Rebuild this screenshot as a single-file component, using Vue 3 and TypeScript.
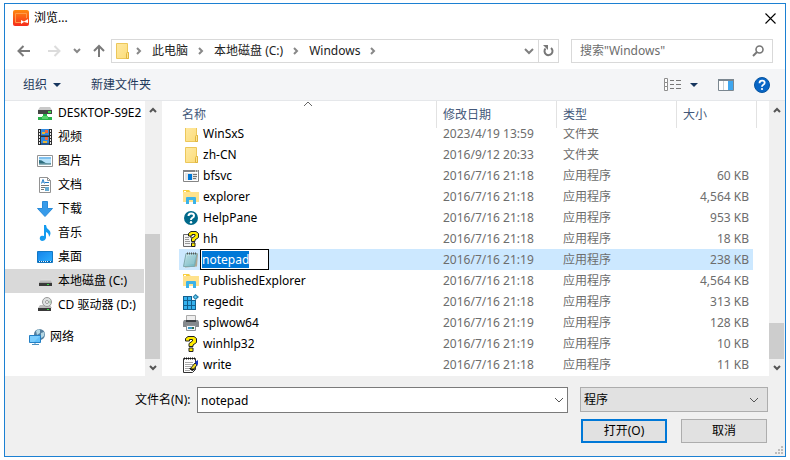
<script setup lang="ts">
import { onMounted, ref } from 'vue'

interface TreeItem {
  label: string
  icon: string
  root?: boolean
  selected?: boolean
}

interface FileItem {
  name: string
  icon: string
  date: string
  type: string
  size: string
  editing?: boolean
}

const crumbs: string[] = ['此电脑', '本地磁盘 (C:)', 'Windows']

const tree: TreeItem[] = [
  { label: 'DESKTOP-S9E2', icon: 'netdrive' },
  { label: '视频', icon: 'video' },
  { label: '图片', icon: 'picture' },
  { label: '文档', icon: 'document' },
  { label: '下载', icon: 'download' },
  { label: '音乐', icon: 'music' },
  { label: '桌面', icon: 'desktop' },
  { label: '本地磁盘 (C:)', icon: 'drive', selected: true },
  { label: 'CD 驱动器 (D:)', icon: 'cd' },
  { label: '网络', icon: 'network', root: true },
]

const app = '应用程序'
const files = ref<FileItem[]>([
  { name: 'WinSxS', icon: 'folder', date: '2023/4/19 13:59', type: '文件夹', size: '' },
  { name: 'zh-CN', icon: 'folder', date: '2016/9/12 20:33', type: '文件夹', size: '' },
  { name: 'bfsvc', icon: 'exe', date: '2016/7/16 21:18', type: app, size: '60 KB' },
  { name: 'explorer', icon: 'explorer', date: '2016/7/16 21:18', type: app, size: '4,564 KB' },
  { name: 'HelpPane', icon: 'helppane', date: '2016/7/16 21:18', type: app, size: '953 KB' },
  { name: 'hh', icon: 'hh', date: '2016/7/16 21:18', type: app, size: '18 KB' },
  { name: 'notepad', icon: 'notepad', date: '2016/7/16 21:19', type: app, size: '238 KB', editing: true },
  { name: 'PublishedExplorer', icon: 'explorer', date: '2016/7/16 21:18', type: app, size: '4,564 KB' },
  { name: 'regedit', icon: 'regedit', date: '2016/7/16 21:18', type: app, size: '313 KB' },
  { name: 'splwow64', icon: 'printer', date: '2016/7/16 21:19', type: app, size: '128 KB' },
  { name: 'winhlp32', icon: 'winhlp', date: '2016/7/16 21:19', type: app, size: '10 KB' },
  { name: 'write', icon: 'write', date: '2016/7/16 21:18', type: app, size: '11 KB' },
])

const fileName = ref('notepad')
const filter = ref('程序')
const renameBox = ref<HTMLInputElement[]>([])

onMounted(() => {
  const box = renameBox.value[0]
  box?.focus()
  box?.select()
})
</script>

<template>
  <svg class="sprite" aria-hidden="true">
    <defs>
      <linearGradient id="g-folder" x1="0" y1="0" x2="1" y2="1">
        <stop offset="0" stop-color="#ffe9a2" /><stop offset="1" stop-color="#fbdc79" />
      </linearGradient>
      <linearGradient id="g-blue" x1="0" y1="0" x2="1" y2="1">
        <stop offset="0" stop-color="#1583e9" /><stop offset="1" stop-color="#2cb0ff" />
      </linearGradient>
      <linearGradient id="g-logo" x1="0" y1="0" x2="0" y2="1">
        <stop offset="0" stop-color="#ff8a10" /><stop offset="1" stop-color="#f62a1c" />
      </linearGradient>
      <linearGradient id="g-drive" x1="0" y1="0" x2="0" y2="1">
        <stop offset="0" stop-color="#e4e4e4" /><stop offset="1" stop-color="#a2a2a2" />
      </linearGradient>
      <linearGradient id="g-note" x1="0" y1="0" x2="1" y2="1">
        <stop offset="0" stop-color="#d5eef2" /><stop offset="1" stop-color="#62aebb" />
      </linearGradient>
    </defs>
    <symbol id="i-folder" viewBox="0 0 16 16">
      <path d="M2.5.5h11v9h1v6h-12z" fill="url(#g-folder)" stroke="#ecc75a" />
      <path d="M12.5 15.5v-5q0-1 1-1h1v6z" fill="#ffe594" stroke="#dfb53f" />
    </symbol>
    <symbol id="i-netdrive" viewBox="0 0 16 16">
      <path d="M3 2h10l2 3H1z" fill="#c9c9c9" /><path d="M1 5h14v4H1z" fill="#454545" />
      <path d="M11 6h3v2h-3z" fill="#3ee04a" /><path d="M6 9h4v3h5v3H1v-3h5z" fill="#27b148" />
      <path d="M5 11h6v3H5z" fill="#58d26d" />
    </symbol>
    <symbol id="i-video" viewBox="0 0 16 16">
      <path d="M1 0h14v16H1z" fill="#303030" /><path d="M4 0h8v7H4zM4 8h8v8H4z" fill="#338ae0" />
      <path d="M5 3h3v2H5zM6 12h4v3H6z" fill="#e5b63b" /><path d="M8 1h3v3H8zM8 8h3v3H8z" fill="#ef683e" />
      <path d="M4 6h8v1H4zM4 14h8v2H4z" fill="#255690" />
      <path d="M2.5 1v15M13.5 1v15" stroke="#eee" stroke-dasharray="2 1" />
    </symbol>
    <symbol id="i-picture" viewBox="0 0 16 16">
      <path d="M.5 2.5h15v11H.5z" fill="#fff" stroke="#939393" /><path d="M2 4h12v8H2z" fill="#b7e3fa" />
      <path d="M2 4h12v2H2z" fill="#7fc0ee" />
      <path d="M2 7q3 0 5 2t7 1v1H2z" fill="#2f6f80" /><path d="M2 10.500h12V12H2z" fill="#8fb4bc" />
    </symbol>
    <symbol id="i-document" viewBox="0 0 16 16">
      <path d="M2.5.5h8l3 3v12h-11z" fill="#fff" stroke="#929292" /><path d="M10.5.5v3h3" fill="none" stroke="#929292" />
      <path d="M4.500 6.500l1.500-4 1.500 4m-2-1h1M8 5.500h4" stroke="#237bc5" fill="none" />
      <path d="M4 8.500h8M4 10.500h8M4 12.500h3" stroke="#777" /><path d="M8 10h4v4H8z" fill="#69acd2" />
    </symbol>
    <symbol id="i-download" viewBox="0 0 16 16">
      <path d="M5.500.5h5v7h5L8 15.500.5 7.500h5z" fill="#379bea" stroke="#298bd9" />
    </symbol>
    <symbol id="i-music" viewBox="0 0 16 16">
      <path d="M7 0h2q0 3 3 5 3 3 0 7 0-4-3-5v6q-1 3-4 3-3-1-2-4 1-2 4-1z" fill="#149bef" />
    </symbol>
    <symbol id="i-desktop" viewBox="0 0 16 16">
      <path d="M.5 2.500h15v11H.5z" fill="url(#g-blue)" stroke="#1278c4" />
      <path d="M1 12.500h14" stroke="#0c5c9e" /><path d="M2 12.500h1M4 12.500h7M13 12.500h1" stroke="#e9f7ff" stroke-dasharray="1 1" />
    </symbol>
    <symbol id="i-drive" viewBox="0 0 16 16">
      <path d="M4 6h9l2 4H2z" fill="url(#g-drive)" /><path d="M2 10h13v3H2z" fill="#393939" />
      <path d="M10 11h2v1h-2z" fill="#34dc41" />
    </symbol>
    <symbol id="i-cd" viewBox="0 0 16 16">
      <path d="M3 8h10l2 3H1z" fill="#bdbdbd" />
      <circle cx="10" cy="5" r="4.500" fill="#dfe2e2" stroke="#989898" /><path d="M10 5l4-2v4z" fill="#b5cfbb" />
      <circle cx="10" cy="5" r="1.500" fill="#fff" stroke="#999" />
      <path d="M1 11h13v3H1z" fill="#393939" /><path d="M10 12h2v1h-2z" fill="#34dc41" />
    </symbol>
    <symbol id="i-network" viewBox="0 0 16 16">
      <circle cx="10.500" cy="5.500" r="5.500" fill="#547f9e" />
      <path d="M7 2q3-3 4-1v3L8 6zM12 4l3-1q1 3-1 5l-2 1z" fill="#b4d7e4" />
      <path d="M.5 6.500h11v7H.5z" fill="#60c0fa" stroke="#237fc4" /><path d="M1 7h10L5 13H1z" fill="#8cd6ff" opacity=".6" />
      <path d="M3 15.500h7M6 14v1" stroke="#4d91bf" />
    </symbol>
    <symbol id="i-exe" viewBox="0 0 16 16">
      <path d="M.5 2.500h15v11H.5z" fill="#fff" stroke="#858585" /><path d="M0 2h16v2H0z" fill="#858585" />
      <path d="M12 3h1M14 3h1" stroke="#fff" /><path d="M2 5h12v7H2z" fill="#e4e4e4" />
      <path d="M5 6h4v6H5z" fill="#0078d7" /><path d="M10 6.500h4M10 8.500h4M10 10.500h3" stroke="#777" />
    </symbol>
    <symbol id="i-explorer" viewBox="0 0 16 16">
      <path d="M0 1h6l2 2h8v10H0z" fill="#ffe28c" /><path d="M0 1h6l1 2H0z" fill="#f8cf42" /><path d="M1 2h2v1H1z" fill="#fff" />
      <path d="M3 15V9q0-1 1-1h8q1 0 1 1v6h-3v-4H6v4z" fill="#3bb2e8" />
    </symbol>
    <symbol id="i-helppane" viewBox="0 0 16 16">
      <circle cx="8" cy="8" r="7" fill="#00698a" />
      <path d="M5.500 6q0-2.500 2.700-2.500T11 5.700Q11 7 9.300 7.800 8 8.400 8 10" fill="none" stroke="#fff" stroke-width="2" />
      <circle cx="8" cy="12.300" r="1.200" fill="#fff" />
    </symbol>
    <symbol id="i-hh" viewBox="0 0 16 16">
      <path d="M.5 3.500h7v3h4v9H.5z" fill="#f5f5f5" stroke="#686868" /><path d="M2 6.500h4M2 8.500h4M2 10.500h5M2 12.500h5" stroke="#999" />
      <path d="M5.500 5V2.500L8 .5h5l2.500 2v4L12 9v1.500H8.500V7.500L12 5V3.500H9V5zM8.500 12h3.500v3.500H8.500z" fill="#ffec00" stroke="#222" />
    </symbol>
    <symbol id="i-notepad" viewBox="0 0 16 16">
      <path d="M4 1.500h11l-1 13-12 1z" fill="#b3a790" /><path d="M3 1.500h11l-2.500 13H.5z" fill="url(#g-note)" stroke="#7fa9ae" />
      <path d="M4 5h8M3.500 7h8M3 9h8M3 11h8" stroke="#9cccd3" /><path d="M4 1.500h10" stroke="#555" stroke-width="2" stroke-dasharray="1 1" />
    </symbol>
    <symbol id="i-regedit" viewBox="0 0 16 16">
      <path d="M0 2h9v4h4v10H0z" fill="#12608f" />
      <path d="M1 3h3v3H1zM5 3h3v3H5zM1 7h3v4H1zM5 7h3v4H5zM9 7h3v4H9zM1 12h3v3H1zM5 12h3v3H5zM9 12h3v3H9z" fill="#35b2ee" />
      <path d="M12.500 0L16 3l-3.500 3L9.500 3z" fill="#267eaa" /><path d="M12.500 1.500L14 3l-1.500 1.500L11 3z" fill="#6bd1f4" />
    </symbol>
    <symbol id="i-printer" viewBox="0 0 16 16">
      <path d="M3.500.5h9v6h-9z" fill="#eee" stroke="#aaa" /><path d="M1 5h14l1 2v5H0V7z" fill="#85898d" />
      <path d="M3 5h10v2H3z" fill="#3d4145" /><path d="M3.500 10.500h9v5h-9z" fill="#f3f7fa" stroke="#8b8f93" />
      <path d="M5 12h4v2H5z" fill="#389bc8" /><path d="M9 12h2v2H9z" fill="#346c48" />
    </symbol>
    <symbol id="i-winhlp" viewBox="0 0 16 16">
      <path d="M2.500 5V2.500L5 .5h6l2.500 2v4L10 9v1.500H6V7.500L9.500 5V3.500H6.500V5zM6 12h4v3.500H6z" fill="#ffec00" stroke="#222" />
    </symbol>
    <symbol id="i-write" viewBox="0 0 16 16">
      <path d="M.5 1.500h12v11l-3 3h-9z" fill="#fff" stroke="#333" /><path d="M1 1.500h12" stroke="#111" stroke-width="2" stroke-dasharray="1 1" />
      <path d="M2 5.500h8M2 7.500h8M2 9.500h6M2 11.500h5M2 13.500h5" stroke="#aaa" />
      <path d="M7 12l5-6 2 2-4 5z" fill="#f2db21" stroke="#222" /><path d="M12 5l3-2v4l-1 2z" fill="#1a35c0" /><path d="M6 11l7 1-4 2z" fill="#111" />
    </symbol>
    <symbol id="i-up" viewBox="0 0 8 8"><path d="M1 6l3-3 3 3" fill="none" stroke="#555" stroke-width="2" /></symbol>
    <symbol id="i-down" viewBox="0 0 8 8"><path d="M1 2l3 3 3-3" fill="none" stroke="#555" stroke-width="2" /></symbol>
    <symbol id="i-recent" viewBox="0 0 8 8"><path d="M1 2l3 3 3-3" fill="none" stroke="#888" stroke-width="2" /></symbol>
    <symbol id="i-next" viewBox="0 0 8 8"><path d="M2 1l3 3-3 3" fill="none" stroke="#888" stroke-width="2" /></symbol>
    <symbol id="i-combo" viewBox="0 0 10 8"><path d="M1 2l4 4 4-4" fill="none" stroke="#555" /></symbol>
    <symbol id="i-caret" viewBox="0 0 8 4"><path d="M0 0h8L4 4z" fill="#16365f" /></symbol>
  </svg>

  <main class="dialog">
    <header class="title">
      <svg class="i16" viewBox="0 0 16 16" aria-hidden="true">
        <rect width="16" height="16" rx="2" fill="url(#g-logo)" />
        <path d="M8 12.500H2.500v-9h11V8" fill="none" stroke="#ff9a4a" />
        <path d="M8 10l3 1.500L15 9v4l-4-1-3 2z" fill="#fff" />
      </svg>
      <h1>浏览...</h1>
      <button class="close" type="button" aria-label="关闭">
        <svg width="11" height="11" viewBox="0 0 11 11"><path d="M.5.5l10 10M10.500.5l-10 10" stroke="#000" stroke-width="1.100" /></svg>
      </button>
    </header>

    <nav class="nav">
      <div class="history">
        <button type="button" aria-label="后退">
          <svg width="14" height="12" viewBox="0 0 14 12"><path d="M13 6H2M6.500 1L1.500 6l5 5" fill="none" stroke="#7a7a7a" stroke-width="2" /></svg>
        </button>
        <button type="button" aria-label="前进" disabled>
          <svg width="14" height="12" viewBox="0 0 14 12"><path d="M1 6h11M7.500 1l5 5-5 5" fill="none" stroke="#dcdcdc" stroke-width="2" /></svg>
        </button>
        <button type="button" class="recent" aria-label="最近浏览的位置"><svg class="i8"><use href="#i-recent" /></svg></button>
        <button type="button" aria-label="向上">
          <svg width="12" height="13" viewBox="0 0 12 13"><path d="M6 13V2M1 7l5-5 5 5" fill="none" stroke="#7a7a7a" stroke-width="2" /></svg>
        </button>
      </div>
      <div class="address">
        <svg class="i16 place"><use href="#i-folder" /></svg>
        <svg class="i8"><use href="#i-next" /></svg>
        <template v-for="crumb in crumbs" :key="crumb">
          <a href="#">{{ crumb }}</a>
          <svg class="i8"><use href="#i-next" /></svg>
        </template>
        <button type="button" class="previous" aria-label="以前的位置">
          <svg width="10" height="8" viewBox="0 0 10 8"><path d="M1 2l4 4 4-4" fill="none" stroke="#808080" stroke-width="2" /></svg>
        </button>
        <button type="button" class="refresh" aria-label="刷新">
          <svg width="11" height="12" viewBox="0 0 11 12"><path d="M8 3a4 4 0 1 1-5.500.5" fill="none" stroke="#777" stroke-width="2" /><path d="M0 0h5v5L3.500 3.500z" fill="#777" /></svg>
        </button>
      </div>
      <label class="search">
        <input type="search" placeholder="搜索&quot;Windows&quot;" aria-label="搜索" />
        <svg width="12" height="12" viewBox="0 0 12 12"><circle cx="7.500" cy="4.500" r="3.500" fill="none" stroke="#777" stroke-width="1.600" /><path d="M5 7l-4 4" stroke="#777" stroke-width="2" /></svg>
      </label>
    </nav>

    <div class="commands">
      <button type="button">组织<svg class="caret"><use href="#i-caret" /></svg></button>
      <button type="button">新建文件夹</button>
      <span class="spring"></span>
      <button type="button" class="views" aria-label="更改视图">
        <svg width="17" height="13" viewBox="0 0 17 13">
          <path d="M.5.5h3v4h-3zM.5 4.500h3v4h-3zM.5 8.500h3v4h-3z" fill="#fff" stroke="#8e8e8e" />
          <path d="M6 2.500h4M12 2.500h5M6 6.500h4M12 6.500h5M6 10.500h4M12 10.500h5" stroke="#777" />
        </svg>
        <svg class="caret"><use href="#i-caret" /></svg>
      </button>
      <button type="button" class="pane" aria-label="预览窗格">
        <svg width="16" height="12" viewBox="0 0 16 12"><path d="M.5.5h15v11H.5z" fill="#fff" stroke="#7b8790" /><path d="M0 0h16v2H0z" fill="#7b8790" /><path d="M10 2h5v9h-5z" fill="#3fa6ee" /><path d="M5.500 2v9" stroke="#c8d0d5" /></svg>
      </button>
      <button type="button" aria-label="帮助">
        <svg class="i16" viewBox="0 0 16 16"><circle cx="8" cy="8" r="7.500" fill="#0866c6" stroke="#07549f" /><path d="M5.500 6.200q0-2.500 2.600-2.500t2.600 2q0 1.200-1.400 2T8 9.800" fill="none" stroke="#fff" stroke-width="1.800" /><circle cx="8" cy="12" r="1.100" fill="#fff" /></svg>
      </button>
    </div>

    <div class="body">
      <aside class="side">
        <ul class="tree">
          <li v-for="item in tree" :key="item.label" :class="{ root: item.root, selected: item.selected }">
            <svg class="i16"><use :href="`#i-${item.icon}`" /></svg>
            <span>{{ item.label }}</span>
          </li>
        </ul>
        <div class="scroll">
          <button type="button" aria-label="向上滚动"><svg class="i8"><use href="#i-up" /></svg></button>
          <div class="track"><div class="thumb" :style="{ height: '52%' }"></div></div>
          <button type="button" aria-label="向下滚动"><svg class="i8"><use href="#i-down" /></svg></button>
        </div>
      </aside>

      <section class="list">
        <table>
          <thead>
            <tr>
              <th>名称<svg class="sort" viewBox="0 0 10 6"><path d="M1 5l4-4 4 4" fill="none" stroke="#666" /></svg></th>
              <th>修改日期</th>
              <th>类型</th>
              <th>大小</th>
            </tr>
          </thead>
          <tbody>
            <tr v-for="file in files" :key="file.icon + file.size + file.date" :class="{ selected: file.editing }">
              <td class="name">
                <svg class="i16"><use :href="`#i-${file.icon}`" /></svg>
                <input v-if="file.editing" ref="renameBox" v-model="file.name" class="rename" type="text" aria-label="重命名" spellcheck="false" />
                <span v-else>{{ file.name }}</span>
              </td>
              <td>{{ file.date }}</td>
              <td class="type">{{ file.type }}</td>
              <td class="size">{{ file.size }}</td>
            </tr>
          </tbody>
        </table>
        <div class="scroll">
          <button type="button" aria-label="向上滚动"><svg class="i8"><use href="#i-up" /></svg></button>
          <div class="track"><div class="thumb" :style="{ height: '15%' }"></div></div>
          <button type="button" aria-label="向下滚动"><svg class="i8"><use href="#i-down" /></svg></button>
        </div>
      </section>
    </div>

    <footer class="footer">
      <label class="caption" for="file-name">文件名(N):</label>
      <div class="combo">
        <input id="file-name" v-model="fileName" type="text" spellcheck="false" />
        <button type="button" aria-label="展开"><svg class="i10"><use href="#i-combo" /></svg></button>
      </div>
      <div class="choices">
        <div class="filter">
          <select v-model="filter" aria-label="文件类型"><option>程序</option></select>
          <svg class="i10"><use href="#i-combo" /></svg>
        </div>
        <div class="actions">
          <button type="button" class="open">打开(O)</button>
          <button type="button">取消</button>
        </div>
      </div>
      <svg class="grip" width="8" height="8" viewBox="0 0 8 8"><path d="M6 0h2v2H6zM3 3h2v2H3zM6 3h2v2H6zM0 6h2v2H0zM3 6h2v2H3zM6 6h2v2H6z" fill="#bcbcbc" /></svg>
    </footer>
  </main>
</template>

<style>
body {
  background: #fff;
}
#app {
  display: flex;
  min-height: 100vh;
}
</style>

<style scoped>
.sprite {
  position: absolute;
  width: 0;
  height: 0;
}
.dialog,
.dialog button,
.dialog input,
.dialog select {
  font-family: 'Noto Sans', 'Noto Sans CJK SC', sans-serif;
  font-size: 12px;
  line-height: 18px;
  color: #000;
}
.dialog {
  flex: 1;
  min-width: 0;
  display: flex;
  flex-direction: column;
  box-sizing: border-box;
  margin: 3px 4px;
  border: 1px solid #1c80d2;
  background: #fff;
}
button {
  display: flex;
  align-items: center;
  justify-content: center;
  padding: 0;
  border: 0;
  background: none;
}
input,
select {
  box-sizing: border-box;
  min-width: 0;
  margin: 0;
  border: 0;
  border-radius: 0;
  outline: 0;
  background: none;
}
svg {
  display: block;
  flex: none;
}
.i16 {
  width: 16px;
  height: 16px;
}
.i8 {
  width: 8px;
  height: 8px;
}
.i10 {
  width: 10px;
  height: 8px;
}
.caret {
  width: 8px;
  height: 4px;
}

.title {
  display: flex;
  align-items: center;
  gap: 5px;
  height: 28px;
  padding: 0 9px 0 8px;
}
h1 {
  flex: 1;
  margin: 0;
  font-size: 12px;
  font-weight: 400;
  line-height: 20px;
}

.nav {
  display: flex;
  align-items: center;
  height: 37px;
  padding: 0 12px;
}
.history {
  display: flex;
  align-items: center;
  gap: 16px;
  width: 94px;
}
.history .recent {
  margin: 0 -4px;
}
.address {
  flex: 1;
  display: flex;
  align-items: center;
  gap: 9px;
  box-sizing: border-box;
  height: 24px;
  padding-left: 2px;
  border: 1px solid #d9d9d9;
}
.address .place {
  margin-right: -4px;
}
.address a {
  color: #222;
  text-decoration: none;
  white-space: nowrap;
}
.previous {
  margin-left: auto;
}
.refresh {
  align-self: stretch;
  width: 20px;
  margin-left: -5px;
  border-left: 1px solid #d9d9d9;
}
.search {
  display: flex;
  align-items: center;
  box-sizing: border-box;
  width: 202px;
  height: 24px;
  margin-left: 12px;
  padding: 0 8px;
  border: 1px solid #d9d9d9;
}
.search input {
  flex: 1;
  padding: 0;
}
.search input::placeholder {
  color: #6d6d6d;
  opacity: 1;
}

.commands {
  display: flex;
  align-items: center;
  gap: 30px;
  height: 31px;
  padding: 0 15px 0 18px;
  border-bottom: 1px solid #e5e7ea;
  background: #f4f5f7;
}
.commands button {
  gap: 6px;
  color: #1e395b;
}
.spring {
  flex: 1;
}
.commands .views {
  gap: 9px;
}
.commands .pane {
  margin: 0 -10px;
}

.body {
  flex: 1;
  display: flex;
}
.side {
  display: flex;
  width: 156px;
  border-right: 1px solid #f0f0f0;
}
.tree {
  flex: 1;
  min-width: 0;
  margin: 0;
  padding: 0 1px 0 0;
  overflow: hidden;
  list-style: none;
}
.tree li {
  display: flex;
  align-items: center;
  gap: 5px;
  height: 24px;
  padding-left: 32px;
  overflow: hidden;
  white-space: nowrap;
}
.tree .root {
  margin-top: 8px;
  padding-left: 24px;
}
.tree .selected {
  background: #d9d9d9;
}
.scroll {
  flex: none;
  display: flex;
  flex-direction: column;
  width: 16px;
  background: #f0f0f0;
}
.scroll button {
  height: 17px;
}
.track {
  flex: 1;
  display: flex;
  flex-direction: column;
  justify-content: flex-end;
}
.thumb {
  margin-right: 1px;
  background: #cdcdcd;
}

.list {
  flex: 1;
  display: flex;
  min-width: 0;
  padding-left: 17px;
}
table {
  flex: 1;
  display: block;
  min-width: 0;
  overflow: hidden;
}
thead,
tbody {
  display: block;
}
thead {
  position: relative;
  z-index: 1;
  padding-right: 12px;
  background: #fff;
}
tbody {
  margin: -5px 16px 0 0;
}
tr {
  display: grid;
  grid-template-columns: minmax(0, 1fr) 120px 120px 80px;
}
tbody tr {
  grid-template-columns: minmax(0, 1fr) 120px 120px 76px;
  height: 21px;
}
tbody .selected {
  background: #cce8ff;
}
th {
  position: relative;
  box-sizing: border-box;
  height: 27px;
  padding: 5px 6px 0 6px;
  border-right: 1px solid #e2e2e2;
  font-weight: 400;
  line-height: 18px;
  text-align: left;
  color: #43587a;
}
th:first-child {
  padding-left: 3px;
}
.sort {
  position: absolute;
  top: 0;
  left: calc(50% - 5px);
  width: 10px;
  height: 6px;
}
td {
  padding: 0 0 0 6px;
  line-height: 21px;
  color: #6d6d6d;
  white-space: nowrap;
}
td.name {
  display: flex;
  align-items: center;
  gap: 4px;
  padding-left: 4px;
  color: #000;
}
td.size {
  padding: 0 4px 0 0;
  text-align: right;
}
.dialog .rename {
  width: 69px;
  height: 21px;
  margin-left: -3px;
  padding: 0 1px;
  border: 1px solid #000;
  background: #fff;
}
.rename::selection {
  background: #0078d7;
  color: #fff;
}

.footer {
  position: relative;
  display: flex;
  align-items: flex-start;
  height: 69px;
  padding: 11px 17px 0 130px;
  background: #f0f0f0;
}
.caption {
  width: 62px;
  line-height: 25px;
  white-space: nowrap;
}
.combo {
  flex: 1;
  display: flex;
  box-sizing: border-box;
  height: 26px;
  border: 1px solid #7a7a7a;
  background: #fff;
}
.combo input {
  flex: 1;
  padding: 2px 3px 0;
}
.combo button {
  width: 17px;
}
.choices {
  width: 188px;
  margin-left: 12px;
}
.filter {
  display: grid;
  grid-template-columns: 1fr 18px;
  align-items: center;
  box-sizing: border-box;
  height: 25px;
  border: 1px solid #adadad;
  background: #e1e1e1;
}
.filter select {
  grid-area: 1 / 1 / 2 / 3;
  width: 100%;
  height: 100%;
  padding: 0 3px;
  appearance: none;
}
.filter svg {
  grid-area: 1 / 2;
  pointer-events: none;
}
.actions {
  display: flex;
  justify-content: space-between;
  padding: 7px 1px 0;
}
.actions button {
  box-sizing: border-box;
  width: 86px;
  height: 24px;
  border: 1px solid #adadad;
  background: #e1e1e1;
}
.actions .open {
  border: 2px solid #0078d7;
}
.grip {
  position: absolute;
  right: 2px;
  bottom: 2px;
}
</style>
